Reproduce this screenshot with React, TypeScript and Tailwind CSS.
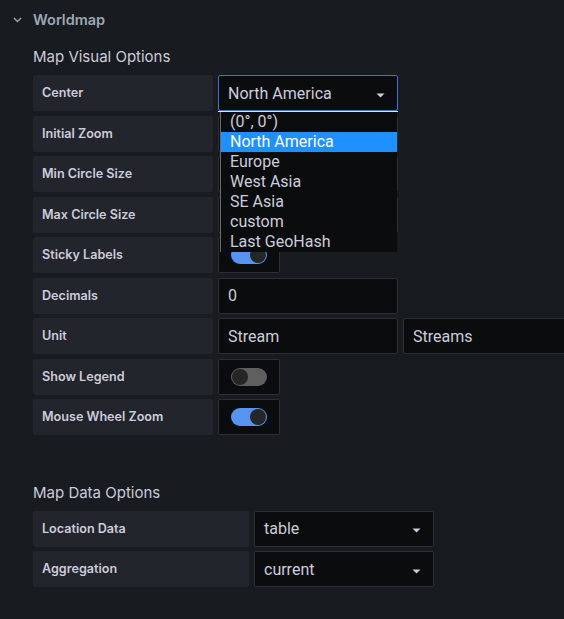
import React from "react";

const Caret = () => (
  <svg width="9" height="5" viewBox="0 0 9 5" className="shrink-0 mt-[3px]">
    <path d="M0.5 0.5 L8.5 0.5 L4.5 4.5 Z" fill="#ccccdc" />
  </svg>
);

const Label = ({ children, w = "w-[180px]" }: { children: React.ReactNode; w?: string }) => (
  <div className={`${w} h-[36px] shrink-0 rounded-[2px] bg-[#22252b] flex items-center pl-[9px] pt-[1px] text-[12.6px] font-semibold text-[#ccccdc] [font-family:Inter,sans-serif]`}>
    {children}
  </div>
);

const Input = ({ value, w = "w-[180px]", blue = false, caret = false }: { value: string; w?: string; blue?: boolean; caret?: boolean }) => (
  <div className={`${w} h-[36px] shrink-0 rounded-[2px] bg-[#0b0c0e] border ${blue ? "border-[#3d71d9]" : "border-[#2c2f35]"} flex items-center justify-between pl-[9px] pr-[12px] pt-[1px] text-[16px] text-[#ccccdc] [font-family:Roboto,sans-serif]`}>
    <span>{value}</span>
    {caret && <Caret />}
  </div>
);

const Switch = ({ on }: { on: boolean }) => (
  <div className="w-[62px] h-[36px] shrink-0 rounded-[2px] bg-[#0b0c0e] border border-[#2c2f35] flex items-center pl-[12px]">
    <div className={`w-[36px] h-[18px] rounded-full flex items-center px-[1px] ${on ? "bg-[#5794f2] justify-end" : "bg-[#5f5f5f] justify-start"}`}>
      <div className="w-[16px] h-[16px] rounded-full bg-[#262626]" />
    </div>
  </div>
);

const Row = ({ children }: { children: React.ReactNode }) => (
  <div className="flex gap-[5px] h-[36px] mb-[4.5px]">{children}</div>
);

export default function App() {
  const items = ["(0°, 0°)", "North America", "Europe", "West Asia", "SE Asia", "custom", "Last GeoHash"];
  return (
    <div className="w-[564px] h-[619px] bg-[#181b1f] overflow-hidden [font-family:Inter,sans-serif]">
      <div className="flex items-center h-[38px] pt-[1px]">
        <div className="w-[33px] flex justify-center pl-[2px]">
          <svg width="9" height="6" viewBox="0 0 9 6">
            <path d="M1 1 L4.5 4.5 L8 1" stroke="#9fa7b3" strokeWidth="1.4" fill="none" />
          </svg>
        </div>
        <span className="text-[14.5px] font-semibold text-[#9fa7b3]">Worldmap</span>
      </div>
      <div className="pl-[33px]">
        <div className="h-[37px] flex items-center text-[15px] text-[#ccccdc] pt-[1px]">Map Visual Options</div>
        <div className="relative">
          <Row>
            <Label>Center</Label>
            <Input value="North America" blue caret />
          </Row>
          <Row>
            <Label>Initial Zoom</Label>
            <Input value="" />
          </Row>
          <Row>
            <Label>Min Circle Size</Label>
            <Input value="" />
          </Row>
          <Row>
            <Label>Max Circle Size</Label>
            <Input value="" />
          </Row>
          <Row>
            <Label>Sticky Labels</Label>
            <Switch on />
          </Row>
          <Row>
            <Label>Decimals</Label>
            <Input value="0" />
          </Row>
          <Row>
            <Label>Unit</Label>
            <Input value="Stream" />
            <Input value="Streams" w="w-[170px]" />
          </Row>
          <Row>
            <Label>Show Legend</Label>
            <Switch on={false} />
          </Row>
          <Row>
            <Label>Mouse Wheel Zoom</Label>
            <Switch on />
          </Row>
          <div className="absolute left-[185px] top-[36px] w-[180px] border-t border-[#e8e8e8]">
            <div className="ml-[2px] w-[177px] bg-[#0b0c0e] border-l border-[#6b6b6b] [font-family:Roboto,sans-serif] text-[16px] text-[#ccccdc]">
              {items.map((it) => (
                <div
                  key={it}
                  className={`h-[20px] leading-[20px] pl-[9px] ${it === "North America" ? "bg-[#1e90ff] text-white" : ""}`}
                >
                  {it}
                </div>
              ))}
            </div>
          </div>
        </div>
        <div className="h-[36px]" />
        <div className="h-[35px] flex items-center text-[15px] text-[#ccccdc]">Map Data Options</div>
        <Row>
          <Label w="w-[216px]">Location Data</Label>
          <Input value="table" caret />
        </Row>
        <Row>
          <Label w="w-[216px]">Aggregation</Label>
          <Input value="current" caret />
        </Row>
      </div>
    </div>
  );
}
